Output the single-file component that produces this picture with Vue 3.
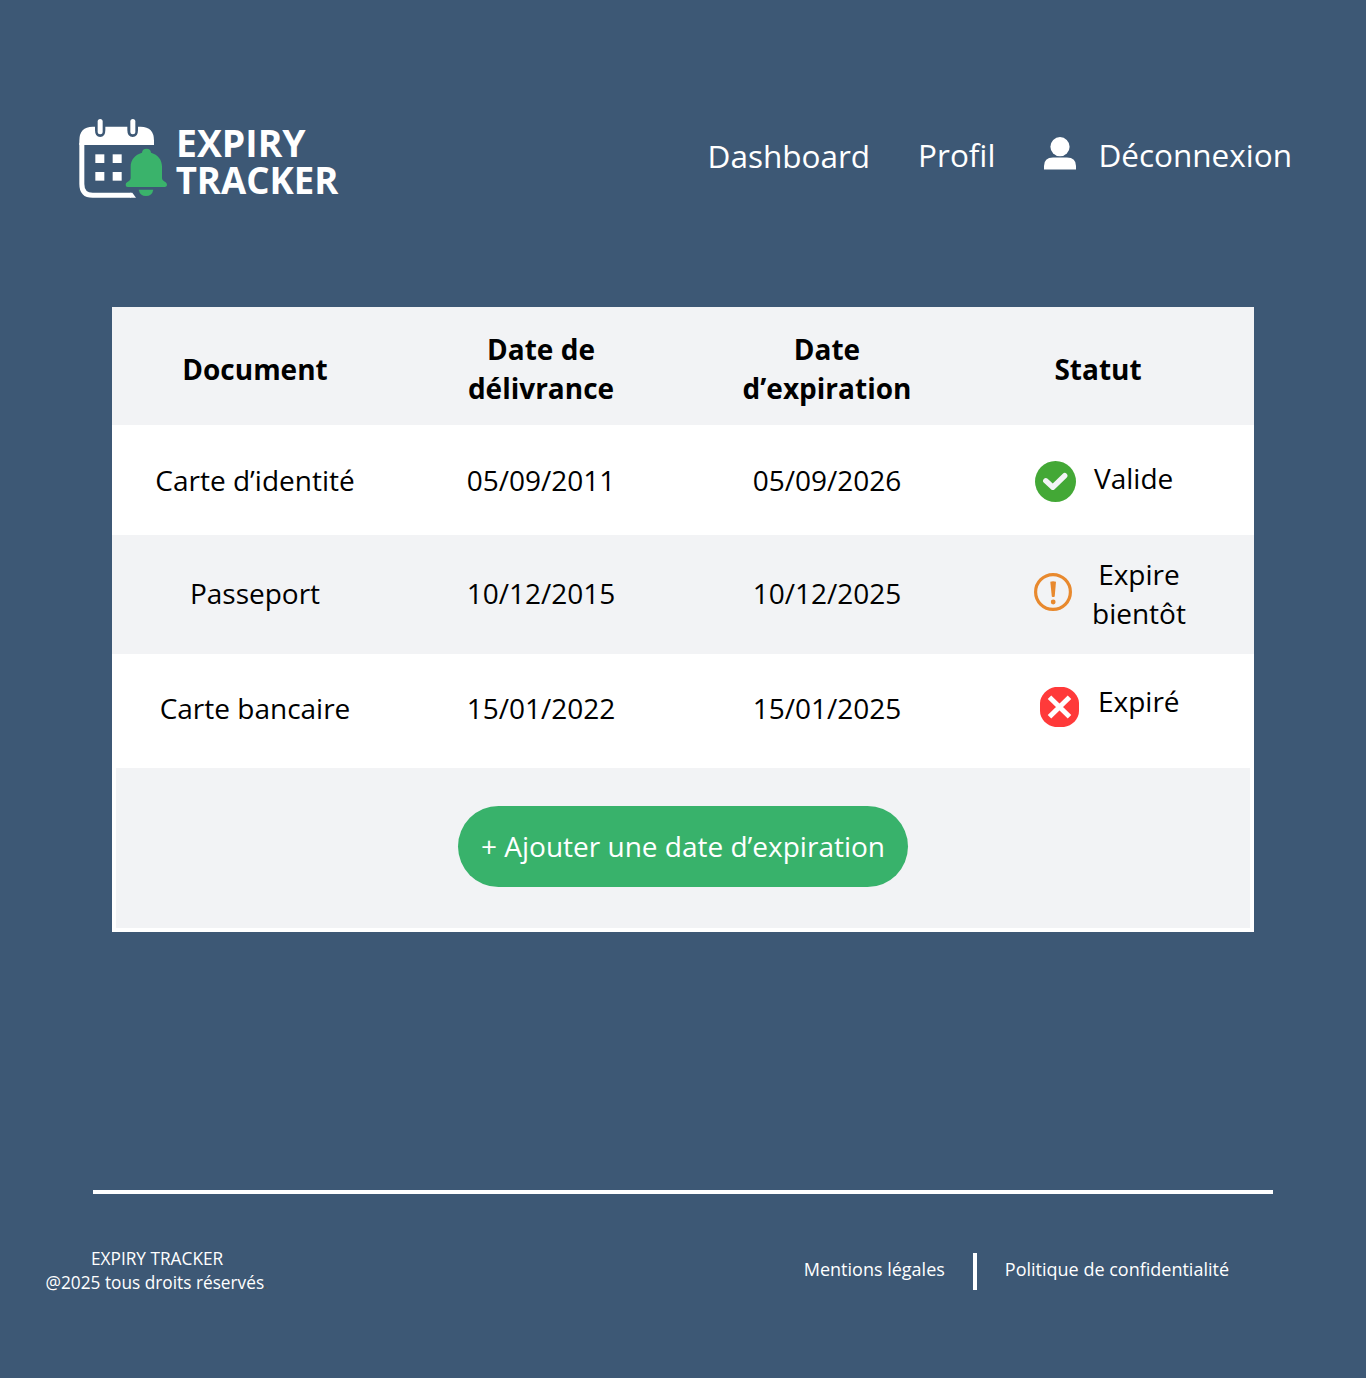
<script setup>
const documents = [
  { name: 'Carte d’identité', issued: '05/09/2011', expires: '05/09/2026', status: 'valid', label: ['Valide'] },
  { name: 'Passeport', issued: '10/12/2015', expires: '10/12/2025', status: 'soon', label: ['Expire', 'bientôt'] },
  { name: 'Carte bancaire', issued: '15/01/2022', expires: '15/01/2025', status: 'expired', label: ['Expiré'] }
]
</script>

<template>
  <div class="page">
    <header class="header">
      <svg class="logo" viewBox="0 0 840 288" role="img" aria-label="Expiry Tracker">
        <path class="white" d="M28 105V92Q28 50 68 50H75V60Q75 81 90.500 81T106 60V50H172V60Q172 81 188 81T204 60V50H212Q252 50 252 92V105Z" />
        <path class="frame" d="M35.500 98V222Q35.500 256 68 256H182" />
        <path class="white" d="M180 248.500H187L198 263.500H180Z" />
        <rect class="white" x="83" y="27" width="15" height="46" rx="7.500" />
        <rect class="white" x="181" y="27" width="15" height="46" rx="7.500" />
        <rect class="white" x="76" y="133" width="27" height="26" />
        <rect class="white" x="128" y="133" width="27" height="26" />
        <rect class="white" x="76" y="186" width="27" height="26" />
        <rect class="white" x="128" y="186" width="27" height="26" />
        <path class="green" d="M216 128Q217 116 229.500 116T243 128C264 134 276 149 276 170V204Q276 211 287 217Q291 220 291 225T285 231H173Q167 231 167 225T171 217Q182 211 182 204V170C182 149 195 134 216 128Z" />
        <path class="green" d="M206 239H250Q246 258 228 258T206 239Z" />
        <text class="brand" x="318" y="142" textLength="389" lengthAdjust="spacingAndGlyphs">EXPIRY</text>
        <text class="brand" x="317" y="251" textLength="488" lengthAdjust="spacingAndGlyphs">TRACKER</text>
      </svg>
      <nav class="nav">
        <a class="dashboard">Dashboard</a>
        <a class="profile">Profil</a>
        <a class="logout">
          <svg class="user" viewBox="0 0 32 33">
            <circle cx="16" cy="9.700" r="9.600" />
            <path d="M0 32.500V29Q0 20.500 9 20.500H23Q32 20.500 32 29V32.500Z" />
          </svg>
          <span>Déconnexion</span>
        </a>
      </nav>
    </header>

    <main class="card">
      <div class="row head">
        <div>Document</div>
        <div class="two-lines">Date de<br>délivrance</div>
        <div class="two-lines">Date<br>d’expiration</div>
        <div class="status-title">Statut</div>
      </div>
      <div v-for="doc in documents" :key="doc.name" class="row" :class="doc.status">
        <div>{{ doc.name }}</div>
        <div>{{ doc.issued }}</div>
        <div>{{ doc.expires }}</div>
        <div class="status">
          <svg v-if="doc.status === 'valid'" class="icon" viewBox="0 0 41 41">
            <circle cx="20.500" cy="20.500" r="20.500" fill="#43a836" />
            <path d="M10.800 19.800L17.800 26.200L29.700 14.700" fill="none" stroke="#f3f4f6" stroke-width="5.400" stroke-linecap="round" stroke-linejoin="round" />
          </svg>
          <svg v-else-if="doc.status === 'soon'" class="icon" viewBox="0 0 38 38">
            <circle cx="19" cy="19" r="17.400" fill="none" stroke="#e8892e" stroke-width="3.200" />
            <path d="M16.300 8.800Q19 7.800 22 8.800L20.700 23.400Q19.200 24.600 17.800 23.400Z" fill="#e8892e" />
            <circle cx="19.200" cy="29" r="2.400" fill="#e8892e" />
          </svg>
          <svg v-else class="icon" viewBox="0 0 39 40">
            <path d="M15 0H24C32 1 39 9 39 16V24C39 32 32 39 24 40H15C7 39 0 32 0 24V16C0 9 7 1 15 0Z" fill="#ff3a3a" />
            <path d="M9.500 10.200L29.500 29.800M29.500 10.200L9.500 29.800" fill="none" stroke="#fff" stroke-width="5" />
          </svg>
          <span class="label"><template v-for="(line, i) in doc.label" :key="line"><br v-if="i">{{ line }}</template></span>
        </div>
      </div>
      <div class="actions">
        <button class="add">+ Ajouter une date d’expiration</button>
      </div>
    </main>

    <footer class="footer">
      <p class="copyright">EXPIRY TRACKER<br>@2025 tous droits réservés<span class="dot">.</span></p>
      <div class="links">
        <a>Mentions légales</a>
        <span class="divider"></span>
        <a>Politique de confidentialité</a>
      </div>
    </footer>
  </div>
</template>

<style>
body { margin: 0; background: #3d5875; }
</style>

<style scoped>
.page {
  box-sizing: border-box;
  width: 1366px;
  height: 1378px;
  padding-top: 110px;
  overflow: hidden;
  background: #3d5875;
  font-family: "Open Sans", sans-serif;
  color: #fff;
}
.header {
  display: flex;
  justify-content: space-between;
  height: 197px;
  padding: 0 74px 0 70px;
}
.logo { width: 280px; height: 96px; }
.white { fill: #fff; }
.green { fill: #3ab36b; }
.frame { fill: none; stroke: #fff; stroke-width: 15; }
.brand { fill: #fff; font-size: 114px; font-weight: 700; }
.nav {
  display: flex;
  align-items: flex-start;
  padding-top: 22px;
  font-size: 31.500px;
  line-height: 46px;
}
.dashboard { margin: 1px 48px 0 0; }
.profile { margin-right: 49px; }
.logout { display: flex; }
.user { width: 32px; height: 33px; margin: 5px 22px 0 0; fill: #fff; }

.card {
  width: 1142px;
  height: 625px;
  margin-left: 112px;
  background: #fff;
  color: #000;
  font-size: 28px;
  line-height: 39px;
}
.row {
  display: grid;
  grid-template-columns: 286px 286px 286px 284px;
  align-items: center;
  text-align: center;
}
.head { height: 118px; background: #f2f3f5; font-weight: 700; }
.head > div { padding-top: 7px; }
.head > .two-lines { padding-top: 5px; }
.status-title { padding-right: 28px; }
.valid { height: 110px; }
.soon { height: 119px; background: #f2f3f5; }
.soon > div { padding-bottom: 2px; }
.expired { height: 114px; }
.expired > div { padding-bottom: 6px; }
.status { display: flex; align-items: center; }
.valid .status { padding-left: 65px; gap: 18px; }
.valid .icon { width: 41px; height: 41px; margin-top: 3px; }
.valid .label { margin-bottom: 4px; }
.soon .status { padding-left: 64px; gap: 20px; }
.soon .icon { width: 38px; height: 38px; margin-bottom: 3px; }
.expired .status { padding-left: 70px; padding-bottom: 8px; gap: 19px; }
.expired .icon { width: 39px; height: 40px; }
.expired .label { margin-bottom: 11px; }
.actions {
  box-sizing: border-box;
  display: flex;
  justify-content: center;
  height: 164px;
  padding-top: 38px;
  border: solid #fff;
  border-width: 0 4px 4px;
  background: #f2f3f5;
}
.add {
  width: 450px;
  height: 81px;
  padding: 0;
  border: 0;
  border-radius: 41px;
  background: #38b26b;
  color: #fff;
  font: 28px/81px "Open Sans", sans-serif;
  white-space: nowrap;
}

.footer {
  display: flex;
  justify-content: space-between;
  width: 1180px;
  margin: 258px 0 0 93px;
  border-top: 4px solid #fff;
  font-size: 17.250px;
  line-height: 24px;
}
.copyright { margin: 52.500px 0 0 -47.500px; text-align: center; white-space: nowrap; }
.dot { color: #545454; }
.links { display: flex; align-items: center; height: 37px; margin: 59px 44px 0 0; font-size: 18px; }
.links a { padding-bottom: 6px; }
.divider { width: 4px; height: 37px; margin: 0 28px; background: #fff; }
</style>
